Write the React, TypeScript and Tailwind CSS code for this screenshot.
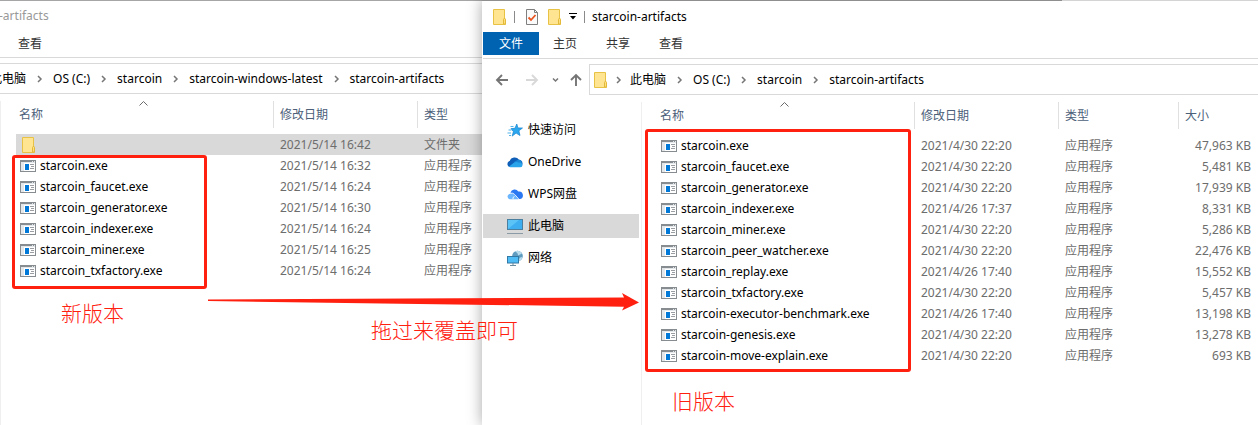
import type { ReactNode } from "react";

type FileRow = { name: string; date: string; type: string; size?: string; folder?: boolean };

const APP = "应用程序";

const newFiles: FileRow[] = [
  { name: "", date: "2021/5/14 16:42", type: "文件夹", folder: true },
  { name: "starcoin.exe", date: "2021/5/14 16:32", type: APP },
  { name: "starcoin_faucet.exe", date: "2021/5/14 16:24", type: APP },
  { name: "starcoin_generator.exe", date: "2021/5/14 16:30", type: APP },
  { name: "starcoin_indexer.exe", date: "2021/5/14 16:24", type: APP },
  { name: "starcoin_miner.exe", date: "2021/5/14 16:25", type: APP },
  { name: "starcoin_txfactory.exe", date: "2021/5/14 16:24", type: APP },
];

const oldFiles: FileRow[] = [
  { name: "starcoin.exe", date: "2021/4/30 22:20", type: APP, size: "47,963 KB" },
  { name: "starcoin_faucet.exe", date: "2021/4/30 22:20", type: APP, size: "5,481 KB" },
  { name: "starcoin_generator.exe", date: "2021/4/30 22:20", type: APP, size: "17,939 KB" },
  { name: "starcoin_indexer.exe", date: "2021/4/26 17:37", type: APP, size: "8,331 KB" },
  { name: "starcoin_miner.exe", date: "2021/4/30 22:20", type: APP, size: "5,286 KB" },
  { name: "starcoin_peer_watcher.exe", date: "2021/4/30 22:20", type: APP, size: "22,476 KB" },
  { name: "starcoin_replay.exe", date: "2021/4/26 17:40", type: APP, size: "15,552 KB" },
  { name: "starcoin_txfactory.exe", date: "2021/4/30 22:20", type: APP, size: "5,457 KB" },
  { name: "starcoin-executor-benchmark.exe", date: "2021/4/26 17:40", type: APP, size: "13,198 KB" },
  { name: "starcoin-genesis.exe", date: "2021/4/30 22:20", type: APP, size: "13,278 KB" },
  { name: "starcoin-move-explain.exe", date: "2021/4/30 22:20", type: APP, size: "693 KB" },
];

function FolderIcon() {
  return (
    <svg width="14" height="16" viewBox="0 0 14 16" className="block shrink-0" aria-hidden="true">
      <path d="M.5.5h11v9.500l1 1v4.500H.5z" fill="#ffe592" stroke="#e8c244" />
      <path d="M10.500 15V10.500q0-1 1-1t1 1V15z" fill="#ffe07c" stroke="#e3b93a" />
    </svg>
  );
}

function ExeIcon() {
  return (
    <svg width="16" height="12" viewBox="0 0 16 12" className="block shrink-0" shapeRendering="crispEdges" aria-hidden="true">
      <rect width="16" height="12" fill="#878c90" />
      <rect x="1" y="2" width="14" height="9" fill="#e4e7e9" />
      <rect x="4" y="3" width="11" height="8" fill="#fff" />
      <rect x="5" y="4" width="4" height="6" fill="#0078d7" />
      <path d="M10 4h4v1h-4zM11 6h3v1h-3zM10 8h4v1h-4z" fill="#9a9ea2" />
      <path d="M12 1h1v1h-1zM14 1h1v1h-1z" fill="#e4e7e9" />
    </svg>
  );
}

function CheckDocIcon() {
  return (
    <svg width="12" height="16" viewBox="0 0 12 16" className="block shrink-0" aria-hidden="true">
      <path d="M.5.5h8l3 3v12H.5z" fill="#fafafa" stroke="#7f7f7f" />
      <path d="M8.500.5v3h3" fill="none" stroke="#7f7f7f" />
      <path d="M2.500 8.500l2.500 2.500 4.500-5" fill="none" stroke="#e8531f" strokeWidth="1.800" />
    </svg>
  );
}

function Chevron({ down = false }: { down?: boolean }) {
  return (
    <svg width="7" height="8" viewBox="0 0 7 8" className="block shrink-0" aria-hidden="true">
      <path d={down ? "M1 2.500l2.500 2.500L6 2.500" : "M2 1l3 3-3 3"} fill="none" stroke="#767676" strokeWidth="1.500" />
    </svg>
  );
}

function Arrow({ d, color }: { d: string; color: string }) {
  return (
    <svg width="14" height="14" viewBox="0 0 14 14" className="block" aria-hidden="true">
      <path d={d} fill="none" stroke={color} strokeWidth="1.900" />
    </svg>
  );
}

function StarIcon() {
  return (
    <svg width="16" height="16" viewBox="0 0 16 16" className="block" aria-hidden="true">
      <path d="M9.800 2l1.100 3.900 4.600.1-3.600 2.800 1.100 4.700-3.900-2.400-3.900 3 1.200-4.500L4 6.600l3.900-.3z" fill="#2aa7ee" stroke="#1583cf" strokeWidth=".7" />
      <path d="M3.500 4.500h3M1.500 8h3M.5 11h3.500M2 13.500h2" stroke="#53b4ea" />
    </svg>
  );
}

function OneDriveIcon() {
  return (
    <svg width="16" height="16" viewBox="0 0 16 16" className="block" aria-hidden="true">
      <path d="M3 13a3 3 0 0 1-.3-5.900A5.200 5.200 0 0 1 12 5.800a3.700 3.700 0 0 1 1 7.200z" fill="#0f5fb8" />
      <path d="M7 8l4-2.300a4 4 0 0 1 2.500.4L15 8l-1 3z" fill="#1b86d6" />
      <path d="M2 12.500L7.500 8.300a5 5 0 0 1 4.500.5 2.600 2.600 0 0 1 3.500 2.200 2.300 2.300 0 0 1-2.400 2.300H3z" fill="#2aa4ea" />
    </svg>
  );
}

function WpsIcon() {
  return (
    <svg width="16" height="16" viewBox="0 0 16 16" className="block" aria-hidden="true">
      <path d="M3.500 6.500A4.300 4.300 0 0 1 11.300 5.500 3.800 3.800 0 0 1 12.800 13H9.500z" fill="#2a78f2" />
      <path d="M3 13.300A2.700 2.700 0 0 1 2.500 8q2.500-1.500 4.500.5l4.500 4.800z" fill="#6bb6ff" />
      <path d="M3.500 7.200q2.500-.6 4.200 1.300l4 4.500M6 13q-.5-2 1.500-2.500" fill="none" stroke="#fff" strokeWidth=".9" />
    </svg>
  );
}

function PcIcon() {
  return (
    <svg width="16" height="16" viewBox="0 0 16 16" className="block" aria-hidden="true">
      <rect x=".5" y="1.500" width="15" height="10" fill="#5cc3f7" stroke="#4a7f9f" />
      <path d="M1 11L12 2h3v9z" fill="#3eaef0" />
      <path d="M0 15.500h16" stroke="#8b9ba6" />
    </svg>
  );
}

function NetworkIcon() {
  return (
    <svg width="16" height="16" viewBox="0 0 16 16" className="block" aria-hidden="true">
      <circle cx="10.500" cy="6" r="5.300" fill="#5f9cc0" />
      <path d="M8 1.500q3 1 3 4l4-2a5 5 0 0 0-7-2zM12 10q0-3 3.500-3a5 5 0 0 1-3.500 4z" fill="#b9dcec" />
      <rect x=".5" y="6.500" width="11" height="6.500" fill="#4fbcf6" stroke="#3379a6" />
      <path d="M3 15.500h6M6 13v2" stroke="#6b8b9f" />
    </svg>
  );
}

const places: { label: string; icon: ReactNode; active?: boolean }[] = [
  { label: "快速访问", icon: <StarIcon /> },
  { label: "OneDrive", icon: <OneDriveIcon /> },
  { label: "WPS网盘", icon: <WpsIcon /> },
  { label: "此电脑", icon: <PcIcon />, active: true },
  { label: "网络", icon: <NetworkIcon /> },
];

function Crumbs({ items }: { items: string[] }) {
  return (
    <ol className="flex items-center whitespace-nowrap">
      {items.map((item, i) => (
        <li key={item} className="flex items-center">
          {i > 0 && (
            <span className="flex w-[27px] justify-center">
              <Chevron />
            </span>
          )}
          <a href="#">{item}</a>
        </li>
      ))}
    </ol>
  );
}

function FileTable({ rows, sizes = false }: { rows: FileRow[]; sizes?: boolean }) {
  const head = "border-l border-[#e0e0e0] pl-[6px] text-left font-normal";
  return (
    <table className="w-full table-fixed border-separate border-spacing-0 whitespace-nowrap text-[#6d6d6d]">
      <colgroup>
        <col className="w-[257px]" />
        <col className="w-[144px]" />
        {sizes && <col className="w-[120px]" />}
        <col />
      </colgroup>
      <thead className="text-[#4c607a]">
        <tr className="h-[27px]">
          <th className="relative p-0 pl-[3px] text-left font-normal">
            名称
            <svg width="9" height="5" viewBox="0 0 9 5" className="absolute top-0 left-[123px]" aria-hidden="true">
              <path d="M.5 4.500l4-4 4 4" fill="none" stroke="#6b6b6b" />
            </svg>
          </th>
          <th className={head}>修改日期</th>
          <th className={head}>类型</th>
          {sizes && <th className={head}>大小</th>}
        </tr>
      </thead>
      <tbody>
        <tr className="h-[6px]" aria-hidden="true" />
        {rows.map((row) => (
          <tr key={row.name} className={row.folder ? "h-[21px] bg-[#d9d9d9]" : "h-[21px]"}>
            <td className={row.folder ? "p-0 pl-[6px]" : "p-0 pl-1 text-black"}>
              <span className="flex items-center gap-1">
                {row.folder ? <FolderIcon /> : <ExeIcon />}
                {row.name}
              </span>
            </td>
            <td className="p-0 pl-[7px]">{row.date}</td>
            <td className="p-0 pl-[7px]">{row.type}</td>
            {sizes && <td className="p-0 pr-[7px] text-right">{row.size}</td>}
          </tr>
        ))}
      </tbody>
    </table>
  );
}

function NewWindow() {
  return (
    <section className="flex w-[482px] shrink-0 flex-col overflow-hidden border-t border-[#a6a6a6] bg-white">
      <h2 className="-ml-px flex h-[30px] items-center text-[#999]">-artifacts</h2>
      <div className="flex h-[27px] items-center border-b border-[#d9d9d9] pl-[18px]">
        <button className="text-[#333]">查看</button>
      </div>
      <nav className="mt-[5px] flex h-[31px] items-center border-y border-[#d9d9d9]">
        <div className="-ml-[10px]">
          <Crumbs items={["此电脑", "OS (C:)", "starcoin", "starcoin-windows-latest", "starcoin-artifacts"]} />
        </div>
      </nav>
      <div className="mt-[7px] grow border-l border-[#efefef] pl-[15px]">
        <FileTable rows={newFiles} />
      </div>
    </section>
  );
}

function OldWindow() {
  return (
    <section className="relative flex min-w-0 grow flex-col bg-white pl-px shadow-[0_0_14px_rgba(0,0,0,0.35)]">
      <div className="-ml-px flex h-px">
        <div className="w-[580px] bg-[#8f8f8f]" />
        <div className="grow bg-[#d4d4d4]" />
      </div>
      <header className="flex h-[31px] items-center pl-[10px]">
        <FolderIcon />
        <span className="ml-[7px] h-3 w-px bg-[#8a8a8a]" />
        <button aria-label="属性" className="ml-[11px]">
          <CheckDocIcon />
        </button>
        <button aria-label="新建文件夹" className="ml-[10px]">
          <FolderIcon />
        </button>
        <button aria-label="自定义" className="ml-[7px]">
          <svg width="8" height="7" viewBox="0 0 8 7" className="block" aria-hidden="true">
            <path d="M0 0h8v1H0zM1 3h6L4 6.500z" />
          </svg>
        </button>
        <span className="ml-[7px] h-3 w-px bg-[#8a8a8a]" />
        <h2 className="ml-[7px]">starcoin-artifacts</h2>
      </header>
      <div className="flex h-[27px] items-start border-b border-[#d9d9d9] text-[#333]">
        <button className="h-[23px] w-14 bg-[#0063b1] text-white">文件</button>
        <button className="ml-[14px] h-6 w-6 whitespace-nowrap">主页</button>
        <button className="ml-[29px] h-6 w-6 whitespace-nowrap">共享</button>
        <button className="ml-[29px] h-6 w-6 whitespace-nowrap">查看</button>
      </div>
      <nav className="mt-[5px] flex h-[31px] items-center">
        <button aria-label="后退" className="ml-[12px]">
          <Arrow d="M13 7H2M7 2L2 7l5 5" color="#757575" />
        </button>
        <button aria-label="前进" className="ml-[16px]">
          <Arrow d="M1 7h11M7 2l5 5-5 5" color="#d8d8d8" />
        </button>
        <button aria-label="最近浏览的位置" className="ml-[13px]">
          <Chevron down />
        </button>
        <button aria-label="上移" className="ml-[10px]">
          <Arrow d="M7 13V2M2 7l5-5 5 5" color="#757575" />
        </button>
        <div className="ml-[6px] flex h-full grow items-center border border-r-0 border-[#d9d9d9] pl-1">
          <FolderIcon />
          <span className="ml-[7px] mr-[8px]">
            <Chevron />
          </span>
          <Crumbs items={["此电脑", "OS (C:)", "starcoin", "starcoin-artifacts"]} />
        </div>
      </nav>
      <div className="mt-[7px] flex grow">
        <aside className="w-[158px] shrink-0 pt-4 pr-[2px]">
          <ul className="flex flex-col gap-2">
            {places.map((p) => (
              <li key={p.label}>
                <a
                  href="#"
                  className={p.active ? "flex h-6 items-center gap-[5px] bg-[#d9d9d9] pl-6" : "flex h-6 items-center gap-[5px] pl-6"}
                >
                  {p.icon}
                  {p.label}
                </a>
              </li>
            ))}
          </ul>
        </aside>
        <div className="grow border-l border-[#efefef] pl-[15px]">
          <FileTable rows={oldFiles} sizes />
        </div>
      </div>
    </section>
  );
}

function Annotations() {
  return (
    <div className="pointer-events-none absolute inset-0 overflow-hidden font-['Noto_Sans_CJK_SC',sans-serif] text-[21px] leading-[28px] font-light whitespace-nowrap text-[#ff2010]">
      <div className="absolute top-[155px] left-[12px] h-[134px] w-[195px] rounded-[3px] border-3 border-[#ff2010]" />
      <div className="absolute top-[129px] left-[645px] h-[243px] w-[266px] rounded-[3px] border-3 border-[#ff2010]" />
      <svg width="432" height="20" viewBox="0 0 432 20" className="absolute top-[292px] left-[208px]" aria-hidden="true">
        <path d="M0 7.500L416 5.500 414 1l17 9.500L414 18.500l2-3.800L0 9z" fill="#ff2010" />
      </svg>
      <p className="absolute top-[298px] left-[61px]">新版本</p>
      <p className="absolute top-[315px] left-[371px]">拖过来覆盖即可</p>
      <p className="absolute top-[386px] left-[672px]">旧版本</p>
    </div>
  );
}

export default function App() {
  return (
    <main className="relative flex min-h-screen overflow-hidden bg-white font-['Noto_Sans','Noto_Sans_CJK_SC',sans-serif] text-xs text-black">
      <NewWindow />
      <OldWindow />
      <Annotations />
    </main>
  );
}
